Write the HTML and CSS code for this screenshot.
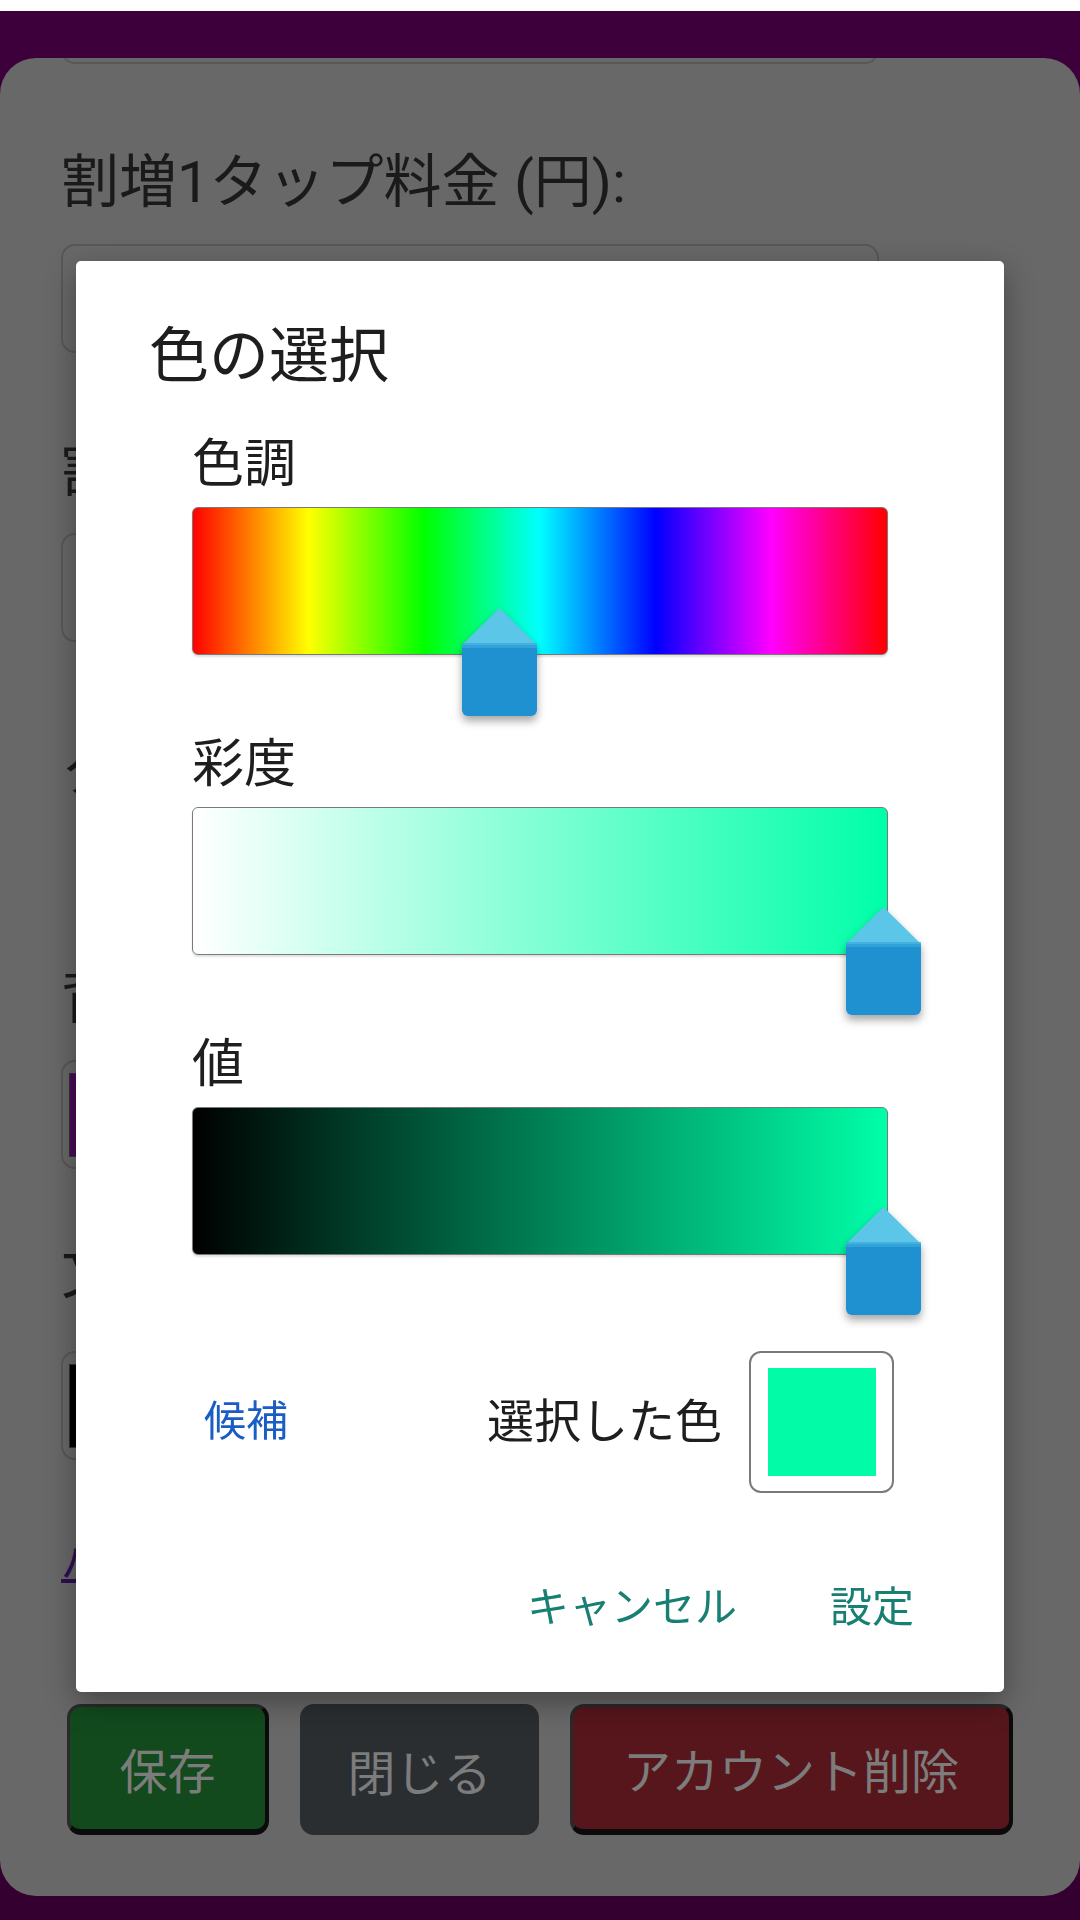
FILE: index.html
```html
<!DOCTYPE html>
<html lang="ja">
<head>
<meta charset="utf-8">
<title>色の選択</title>
<link rel="stylesheet" href="styles.css">
</head>
<body>
<div class="statusbar"></div>
<div class="page">
  <div class="card">
    <div class="form">
      <div class="input input--top"></div>
      <div class="label label--first">割増1タップ料金 (円):</div>
      <div class="input"></div>
      <div class="label">割増</div>
      <div class="input"></div>
      <div class="label label--gap">クラス</div>
      <div class="label label--color">背景色:</div>
      <div class="input input--swatch"><span class="mini-swatch mini-swatch--purple"></span></div>
      <div class="label label--text">文字色:</div>
      <div class="input input--swatch"><span class="mini-swatch mini-swatch--black"></span></div>
      <a class="link">パスワードを変更する</a>
    </div>
    <div class="btn-row">
      <button class="btn btn--save">保存</button>
      <button class="btn btn--close">閉じる</button>
      <button class="btn btn--delete">アカウント削除</button>
    </div>
  </div>
</div>

<div class="overlay">
  <div class="dialog">
    <h1 class="dialog-title">色の選択</h1>
    <div class="picker">
      <div class="picker-label picker-label--first">色調</div>
      <div class="bar bar--hue">
        <svg class="thumb thumb--hue" viewBox="0 0 75 110" width="75" height="110"><polygon points="37.5,0 75,37 0,37" fill="#5cc6e9"/><path d="M0 37 H75 V102 A6 6 0 0 1 69 108 H6 A6 6 0 0 1 0 102 Z" fill="#1f91d1"/><rect x="0" y="35" width="75" height="5" fill="#3aa9dc" opacity="0.7"/></svg>
      </div>
      <div class="picker-label">彩度</div>
      <div class="bar bar--sat">
        <svg class="thumb thumb--end" viewBox="0 0 75 110" width="75" height="110"><polygon points="37.5,0 75,37 0,37" fill="#5cc6e9"/><path d="M0 37 H75 V102 A6 6 0 0 1 69 108 H6 A6 6 0 0 1 0 102 Z" fill="#1f91d1"/><rect x="0" y="35" width="75" height="5" fill="#3aa9dc" opacity="0.7"/></svg>
      </div>
      <div class="picker-label">値</div>
      <div class="bar bar--val">
        <svg class="thumb thumb--end" viewBox="0 0 75 110" width="75" height="110"><polygon points="37.5,0 75,37 0,37" fill="#5cc6e9"/><path d="M0 37 H75 V102 A6 6 0 0 1 69 108 H6 A6 6 0 0 1 0 102 Z" fill="#1f91d1"/><rect x="0" y="35" width="75" height="5" fill="#3aa9dc" opacity="0.7"/></svg>
      </div>
      <div class="result-row">
        <span class="candidates">候補</span>
        <div class="selected">
          <span class="selected-text">選択した色</span>
          <div class="swatch-frame"><div class="swatch"></div></div>
        </div>
      </div>
    </div>
    <div class="actions">
      <span class="action">キャンセル</span>
      <span class="action">設定</span>
    </div>
  </div>
</div>
</body>
</html>
```
FILE: styles.css
```css
* { box-sizing: border-box; }
html, body {
  margin: 0;
  padding: 0;
}
body {
  width: 1080px;
  height: 1920px;
  overflow: hidden;
  background: #36002f;
  font-family: Roboto, "Noto Sans CJK JP", sans-serif;
}
.statusbar {
  height: 11px;
  background: #ffffff;
}
.page {
  height: 1909px;
  padding-top: 47px;
  background: linear-gradient(#3d003a, #33002f);
}
.card {
  height: 1838px;
  background: #686868;
  border-radius: 36px;
  overflow: hidden;
  position: relative;
}
.form {
  width: 879px;
  padding-left: 61px;
  display: flex;
  flex-direction: column;
  align-items: flex-start;
}
.input {
  align-self: stretch;
  height: 109px;
  border: 2px solid #585858;
  border-radius: 14px;
  margin-top: 28px;
  display: flex;
  align-items: center;
  padding-left: 6px;
}
.input--top { margin-top: -103px; }
.label {
  font-size: 58px;
  line-height: 68px;
  color: #1a1a1a;
  margin-top: 84px;
  white-space: nowrap;
}
.label--first { margin-top: 84px; }
.label--gap { margin-top: 95px; }
.label--color { margin-top: 159px; }
.label--text { margin-top: 70px; }
.label--text + .input { margin-top: 44px; }
.mini-swatch {
  display: block;
  width: 60px;
  height: 84px;
  border: 1px solid #333;
}
.mini-swatch--purple { background: #4a0a58; }
.mini-swatch--black { background: #000000; }
.link {
  margin-top: 78px;
  white-space: nowrap;
  font-size: 42px;
  line-height: 50px;
  color: #2e0f52;
  text-decoration: underline;
  text-decoration-thickness: 4px;
}
.btn-row {
  position: absolute;
  left: 67px;
  right: 67px;
  top: 1646px;
  display: flex;
  gap: 31px;
}
.btn {
  height: 131px;
  border-radius: 14px;
  font-family: Roboto, "Noto Sans CJK JP", sans-serif;
  font-size: 48px;
  color: #7c7c7c;
  border: none;
  padding: 0;
}
.btn--save {
  width: 202px;
  background: #124a1e;
  border: 3px solid #2a2a2a;
  border-right: 4px solid #0b0b0b;
  border-bottom: 6px solid #0b0b0b;
}
.btn--close {
  width: 239px;
  background: #2b2e31;
}
.btn--delete {
  flex: 1;
  background: #57161b;
  border: 3px solid #2a2a2a;
  border-right: 4px solid #0b0b0b;
  border-bottom: 6px solid #0b0b0b;
}

.overlay {
  position: fixed;
  inset: 0;
  padding: 261px 0 0 76px;
}
.dialog {
  width: 928px;
  background: #ffffff;
  border-radius: 5px;
  box-shadow: 0 10px 30px rgba(0, 0, 0, 0.35);
  padding: 61px 0 59px 0;
  font-family: Roboto, "Noto Sans CJK JP", sans-serif;
}
.dialog-title {
  margin: 0 0 0 73px;
  font-size: 60px;
  line-height: 70px;
  font-weight: 400;
  color: #1e1e1e;
}
.picker {
  padding: 0 116px;
  display: flex;
  flex-direction: column;
}
.picker-label {
  font-size: 52px;
  line-height: 60px;
  color: #1e1e1e;
  margin-top: 80px;
}
.picker-label--first { margin-top: 43px; }
.bar {
  position: relative;
  height: 148px;
  margin-top: 12px;
  border: 1px solid #7a7a7a;
  border-radius: 6px;
  box-shadow: 0 2px 2px rgba(0, 0, 0, 0.12);
}
.bar--hue {
  background: linear-gradient(to right, #ff0000, #ffff00, #00ff00, #00ffff, #0000ff, #ff00ff, #ff0000);
}
.bar--sat {
  background: linear-gradient(to right, #ffffff, #00ffa8);
}
.bar--val {
  background: linear-gradient(to right, #000000, #00ffa8);
}
.thumb {
  position: absolute;
  display: block;
  filter: drop-shadow(0 5px 4px rgba(0, 0, 0, 0.35));
}
.thumb--hue { left: 269px; top: 100px; }
.thumb--end { left: 653px; top: 99px; }
.result-row {
  margin-top: 96px;
  margin-right: -6px;
  display: flex;
  align-items: center;
  justify-content: space-between;
}
.candidates {
  padding-left: 12px;
  font-size: 42px;
  line-height: 50px;
  color: #1a5dc4;
}
.selected {
  display: flex;
  align-items: center;
  gap: 27px;
}
.selected-text {
  font-size: 47px;
  line-height: 56px;
  color: #1e1e1e;
}
.swatch-frame {
  width: 145px;
  height: 142px;
  border: 2px solid #7a7a7a;
  border-radius: 12px;
  display: flex;
  align-items: center;
  justify-content: center;
}
.swatch {
  width: 108px;
  height: 108px;
  background: #02fba6;
}
.actions {
  margin-top: 90px;
  padding-right: 90px;
  display: flex;
  justify-content: flex-end;
  gap: 93px;
}
.action {
  font-size: 42px;
  line-height: 50px;
  color: #187f73;
}
```
